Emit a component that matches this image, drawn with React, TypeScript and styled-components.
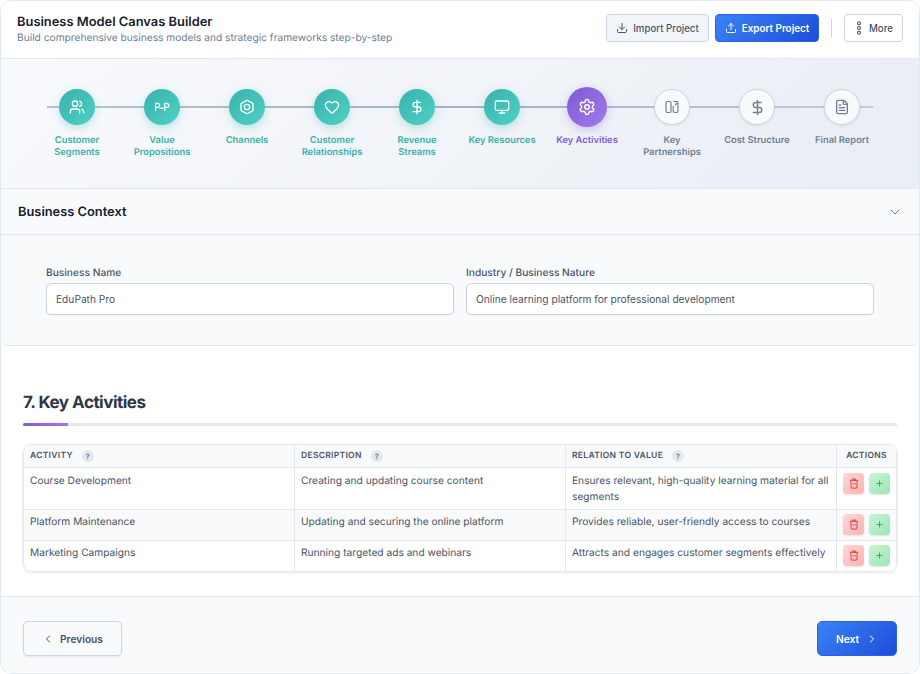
import React from "react";
import styled, { createGlobalStyle } from "styled-components";
import {
  ChevronDown,
  ChevronLeft,
  ChevronRight,
  DollarSign,
  Download,
  FileText,
  Heart,
  Monitor,
  Plus,
  Settings,
  Upload,
  Users,
} from "lucide-react";

const ValueIcon = () => (
  <svg width="16" height="16" viewBox="0 0 16 16" fill="none" stroke="currentColor" strokeWidth="1.2">
    <path d="M1.6 12V4.4h2.1a1.7 1.7 0 0 1 0 3.9H1.6" />
    <path d="M10.8 12V4.4h2.1a1.7 1.7 0 0 1 0 3.9h-2.1" />
    <path d="M5.6 9.2h4" strokeWidth="1.6" />
  </svg>
);

const HexIcon = () => (
  <svg width="16" height="16" viewBox="0 0 24 24" fill="none" stroke="currentColor" strokeWidth="2" strokeLinejoin="round">
    <path d="M21 16V8a2 2 0 0 0-1-1.73l-7-4a2 2 0 0 0-2 0l-7 4A2 2 0 0 0 3 8v8a2 2 0 0 0 1 1.73l7 4a2 2 0 0 0 2 0l7-4A2 2 0 0 0 21 16z" />
    <circle cx="12" cy="12" r="4" />
  </svg>
);

const PartnerIcon = () => (
  <svg width="16" height="16" viewBox="0 0 16 16" fill="none" stroke="currentColor" strokeWidth="1.2">
    <rect x="2" y="2.5" width="5" height="11" rx="1.4" />
    <path d="M9.2 2.5h3.4a1.4 1.4 0 0 1 1.4 1.4v8.2a1.4 1.4 0 0 1-1.4 1.4h-2a1.4 1.4 0 0 1-1.4-1.4V7" />
    <path d="M11 6.4l2-2.6" />
  </svg>
);

const MoreIcon = () => (
  <svg width="10" height="14" viewBox="0 0 10 14" fill="none" stroke="currentColor" strokeWidth="1.1">
    <circle cx="5" cy="2.2" r="1.5" />
    <circle cx="5" cy="7" r="1.5" />
    <circle cx="5" cy="11.8" r="1.5" />
  </svg>
);

const TrashIcon = () => (
  <svg width="10" height="11" viewBox="0 0 10 11" fill="none" stroke="currentColor" strokeWidth="1.1">
    <path d="M1 2.4h8M3.5 2.2V1h3v1.2" />
    <path d="M1.8 2.6l.4 6.6a1 1 0 0 0 1 .9h3.6a1 1 0 0 0 1-.9l.4-6.6" />
    <path d="M4 5v1.5M6 5v1.5" />
  </svg>
);

type Status = "done" | "active" | "todo";

const steps: { label: string; icon: React.ReactNode; status: Status }[] = [
  { label: "Customer Segments", icon: <Users size={16} />, status: "done" },
  { label: "Value Propositions", icon: <ValueIcon />, status: "done" },
  { label: "Channels", icon: <HexIcon />, status: "done" },
  { label: "Customer Relationships", icon: <Heart size={16} />, status: "done" },
  { label: "Revenue Streams", icon: <DollarSign size={16} />, status: "done" },
  { label: "Key Resources", icon: <Monitor size={16} />, status: "done" },
  { label: "Key Activities", icon: <Settings size={18} />, status: "active" },
  { label: "Key Partnerships", icon: <PartnerIcon />, status: "todo" },
  { label: "Cost Structure", icon: <DollarSign size={17} />, status: "todo" },
  { label: "Final Report", icon: <FileText size={16} />, status: "todo" },
];

const rows = [
  {
    activity: "Course Development",
    description: "Creating and updating course content",
    relation: "Ensures relevant, high-quality learning material for all segments",
  },
  {
    activity: "Platform Maintenance",
    description: "Updating and securing the online platform",
    relation: "Provides reliable, user-friendly access to courses",
  },
  {
    activity: "Marketing Campaigns",
    description: "Running targeted ads and webinars",
    relation: "Attracts and engages customer segments effectively",
  },
];

const App = () => {
  return (
    <>
      <GlobalStyle />
      <Frame>
        <Header>
          <TitleBlock>
            <Title>Business Model Canvas Builder</Title>
            <Subtitle>Build comprehensive business models and strategic frameworks step-by-step</Subtitle>
          </TitleBlock>
          <HeaderActions>
            <ImportButton>
              <Download size={12} />
              Import Project
            </ImportButton>
            <ExportButton>
              <Upload size={12} />
              Export Project
            </ExportButton>
            <Divider />
            <MoreButton>
              <MoreIcon />
              More
            </MoreButton>
          </HeaderActions>
        </Header>

        <Stepper>
          <StepLine />
          {steps.map((step) => (
            <Step key={step.label}>
              <CircleSlot>
                <Circle $status={step.status}>{step.icon}</Circle>
              </CircleSlot>
              <StepLabel $status={step.status}>{step.label}</StepLabel>
            </Step>
          ))}
        </Stepper>

        <Context>
          <ContextHead>
            <ContextTitle>Business Context</ContextTitle>
            <ChevronDown size={16} color="#64748b" strokeWidth={1.5} />
          </ContextHead>
          <ContextBody>
            <Field>
              <FieldLabel>Business Name</FieldLabel>
              <Input readOnly value="EduPath Pro" />
            </Field>
            <Field>
              <FieldLabel>Industry / Business Nature</FieldLabel>
              <Input readOnly value="Online learning platform for professional development" />
            </Field>
          </ContextBody>
        </Context>

        <Main>
          <SectionTitle>7. Key Activities</SectionTitle>
          <SectionRule />
          <TableWrap>
            <Table>
              <colgroup>
                <col style={{ width: 271 }} />
                <col style={{ width: 271 }} />
                <col style={{ width: 271 }} />
                <col />
              </colgroup>
              <thead>
                <tr>
                  <Th>
                    Activity<Help>?</Help>
                  </Th>
                  <Th>
                    Description<Help>?</Help>
                  </Th>
                  <Th>
                    Relation to Value<Help>?</Help>
                  </Th>
                  <Th $center>Actions</Th>
                </tr>
              </thead>
              <tbody>
                {rows.map((row) => (
                  <Row key={row.activity}>
                    <Td>{row.activity}</Td>
                    <Td>{row.description}</Td>
                    <Td>{row.relation}</Td>
                    <ActionCell>
                      <ActionRow>
                        <DeleteButton>
                          <TrashIcon />
                        </DeleteButton>
                        <AddButton>
                          <Plus size={9} />
                        </AddButton>
                      </ActionRow>
                    </ActionCell>
                  </Row>
                ))}
              </tbody>
            </Table>
          </TableWrap>
        </Main>

        <Footer>
          <PrevButton>
            <ChevronLeft size={12} />
            Previous
          </PrevButton>
          <NextButton>
            Next
            <ChevronRight size={12} />
          </NextButton>
        </Footer>
      </Frame>
    </>
  );
};

export default App;

const GlobalStyle = createGlobalStyle`
  html, body {
    margin: 0;
    padding: 0;
    background: #fff;
    font-family: Inter, "Liberation Sans", sans-serif;
    text-rendering: geometricPrecision;
    -webkit-font-smoothing: antialiased;
  }
  * { box-sizing: border-box; }
`;

const Frame = styled.div`
  width: 920px;
  height: 674px;
  display: flex;
  flex-direction: column;
  background: #fff;
  border: 1px solid #e2e8f0;
  border-radius: 12px;
  overflow: hidden;
`;

const Header = styled.header`
  height: 58px;
  flex: none;
  padding: 0 16px 3px;
  display: flex;
  align-items: center;
  justify-content: space-between;
  background: #fff;
  border-bottom: 1px solid #e2e8f0;
  box-shadow: 0 1px 0 #e8edf3;
  position: relative;
`;

const TitleBlock = styled.div`
  padding-top: 3px;
`;

const Title = styled.h1`
  margin: 0;
  font-size: 12.9px;
  line-height: 18px;
  font-weight: 600;
  color: #1a202c;
`;

const Subtitle = styled.p`
  margin: -1px 0 0;
  font-size: 10.2px;
  line-height: 15px;
  color: #718096;
`;

const HeaderActions = styled.div`
  display: flex;
  align-items: center;
`;

const BaseButton = styled.button`
  display: inline-flex;
  align-items: center;
  justify-content: center;
  height: 28px;
  border-radius: 4px;
  font-family: inherit;
  font-size: 9.7px;
  font-weight: 500;
  gap: 5px;
  padding: 0;
`;

const ImportButton = styled(BaseButton)`
  width: 103px;
  background: #f1f5f9;
  color: #4a5568;
  border: 1px solid #cbd5e1;
`;

const ExportButton = styled(BaseButton)`
  width: 104px;
  margin-left: 6px;
  background: linear-gradient(135deg, #3b82f6, #1d4ed8);
  color: #fff;
  font-size: 9.9px;
  font-weight: 600;
  border: 1px solid #2563eb;
`;

const Divider = styled.span`
  width: 1px;
  height: 18px;
  background: #cbd5e1;
  margin: 0 12px;
`;

const MoreButton = styled(BaseButton)`
  width: 59px;
  background: #fff;
  color: #4a5568;
  border: 1px solid #cbd5e1;
`;

const Stepper = styled.section`
  flex: none;
  height: 129px;
  padding: 28px 0 0 33.5px;
  display: flex;
  align-items: flex-start;
  position: relative;
  background: linear-gradient(135deg, #f8fafc, #e9edf4);
`;

const StepLine = styled.div`
  position: absolute;
  left: 46px;
  right: 46px;
  top: 47px;
  height: 2px;
  background: linear-gradient(90deg, #b6c2d4, #a3b1c6 55%, #c3cedd);
`;

const Step = styled.div`
  width: 85px;
  display: flex;
  flex-direction: column;
  align-items: center;
  position: relative;
`;

const CircleSlot = styled.div`
  height: 40px;
  display: flex;
  align-items: center;
  justify-content: center;
`;

const circleColors = {
  done: "background: linear-gradient(135deg, #38b2ac, #4fd1c5); color: #fff; box-shadow: 0 3px 8px rgba(56, 178, 172, 0.3);",
  active:
    "width: 40px; height: 40px; background: linear-gradient(135deg, #805ad5, #9f7aea); color: #fff; box-shadow: 0 3px 10px rgba(128, 90, 213, 0.3);",
  todo: "background: #f8fafc; color: #718096; border: 1px solid #cbd5e1; box-shadow: 0 1px 3px rgba(15, 23, 42, 0.08);",
};

const Circle = styled.div<{ $status: Status }>`
  width: 36px;
  height: 36px;
  border-radius: 50%;
  display: flex;
  align-items: center;
  justify-content: center;
  ${(p) => circleColors[p.$status]}
`;

const labelColors = { done: "#38b2ac", active: "#805ad5", todo: "#718096" };

const StepLabel = styled.div<{ $status: Status }>`
  margin-top: 8px;
  width: 72px;
  text-align: center;
  font-size: 9.35px;
  line-height: 12px;
  font-weight: 600;
  white-space: normal;
  color: ${(p) => labelColors[p.$status]};
`;

const Context = styled.section`
  flex: none;
  height: 158px;
  background: #f8fafc;
  border-top: 1px solid #e2e8f0;
  border-bottom: 1px solid #e2e8f0;
  border-radius: 0 0 8px 8px;
`;

const ContextHead = styled.div`
  height: 46px;
  padding: 1px 16px 0 17px;
  display: flex;
  align-items: center;
  justify-content: space-between;
  border-bottom: 1px solid #e2e8f0;
`;

const ContextTitle = styled.h2`
  margin: 0;
  font-size: 12.85px;
  font-weight: 600;
  color: #1a202c;
`;

const ContextBody = styled.div`
  padding: 31px 45px 0;
  display: grid;
  grid-template-columns: 1fr 1fr;
  gap: 12px;
`;

const Field = styled.div`
  display: flex;
  flex-direction: column;
`;

const FieldLabel = styled.label`
  font-size: 10.2px;
  line-height: 14px;
  font-weight: 500;
  color: #4a5568;
  margin-bottom: 3px;
`;

const Input = styled.input`
  height: 32px;
  padding: 0 9px;
  border: 1px solid #cbd5e1;
  border-radius: 5px;
  background: #fff;
  font-family: inherit;
  font-size: 10.2px;
  color: #4a5568;
  box-shadow: 0 1px 2px rgba(15, 23, 42, 0.04);
  outline: none;
`;

const Main = styled.main`
  flex: 1;
  padding: 45px 22px 0;
  background: #fff;
`;

const SectionTitle = styled.h2`
  margin: 0;
  font-size: 17px;
  line-height: 24px;
  font-weight: 700;
  letter-spacing: -0.5px;
  color: #2d3748;
`;

const SectionRule = styled.div`
  margin-top: 8px;
  height: 3px;
  border-radius: 2px;
  background: linear-gradient(90deg, #805ad5, #9f7aea 45px, #e2e8f0 45px);
`;

const TableWrap = styled.div`
  margin-top: 18px;
  border: 1px solid #e2e8f0;
  border-radius: 8px;
  overflow: hidden;
  box-shadow: 0 1px 3px rgba(15, 23, 42, 0.1);
`;

const Table = styled.table`
  width: 100%;
  border-collapse: separate;
  border-spacing: 0;
  table-layout: fixed;
`;

const Th = styled.th<{ $center?: boolean }>`
  height: 23px;
  padding: 0 6px;
  background: #f8fafc;
  font-size: 8.5px;
  font-weight: 600;
  letter-spacing: 0.3px;
  text-transform: uppercase;
  color: #4a5568;
  text-align: ${(p) => (p.$center ? "center" : "left")};
  border-right: 1px solid #e2e8f0;
  border-bottom: 1px solid #e2e8f0;
  &:last-child {
    border-right: 0;
  }
`;

const Help = styled.span`
  display: inline-flex;
  align-items: center;
  justify-content: center;
  width: 12px;
  height: 12px;
  margin-left: 9px;
  border-radius: 50%;
  background: #e2e8f0;
  font-size: 7px;
  color: #64748b;
  vertical-align: middle;
`;

const Row = styled.tr`
  &:nth-child(even) {
    background: #fafafa;
  }
  &:not(:last-child) td {
    border-bottom: 1px solid #e2e8f0;
  }
  &:first-child td {
    padding-top: 5px;
    padding-bottom: 4px;
  }
`;

const Td = styled.td`
  padding: 4px 6px 5px;
  vertical-align: top;
  font-size: 10.2px;
  line-height: 16px;
  color: #4a5568;
  border-right: 1px solid #e2e8f0;
`;

const ActionCell = styled.td`
  padding: 4px 6px 5px;
  vertical-align: top;
`;

const ActionRow = styled.div`
  display: flex;
  justify-content: center;
  gap: 5px;
`;

const SmallButton = styled.button`
  width: 21px;
  height: 21px;
  padding: 0;
  border: 0;
  border-radius: 4px;
  display: flex;
  align-items: center;
  justify-content: center;
  box-shadow: 0 1px 2px rgba(15, 23, 42, 0.1);
`;

const DeleteButton = styled(SmallButton)`
  background: linear-gradient(135deg, #fed7d7, #feb2b2);
  color: #e05252;
`;

const AddButton = styled(SmallButton)`
  background: linear-gradient(135deg, #c6f6d5, #9ae6b4);
  color: #2f855a;
`;

const Footer = styled.footer`
  flex: none;
  height: 77px;
  padding: 7px 22px 0;
  display: flex;
  align-items: center;
  justify-content: space-between;
  background: #f8fafc;
  border-top: 1px solid #e2e8f0;
`;

const NavButton = styled.button`
  height: 35px;
  padding: 0;
  border-radius: 5px;
  display: inline-flex;
  align-items: center;
  justify-content: center;
  gap: 6px;
  font-family: inherit;
  font-size: 10.2px;
  font-weight: 600;
`;

const PrevButton = styled(NavButton)`
  width: 99px;
  background: #f8fafc;
  color: #4a5568;
  border: 1px solid #cbd5e1;
  box-shadow: 0 1px 2px rgba(15, 23, 42, 0.08);
`;

const NextButton = styled(NavButton)`
  width: 80px;
  gap: 7px;
  background: linear-gradient(135deg, #3b82f6, #1d4ed8);
  color: #fff;
  border: 1px solid #2563eb;
`;
